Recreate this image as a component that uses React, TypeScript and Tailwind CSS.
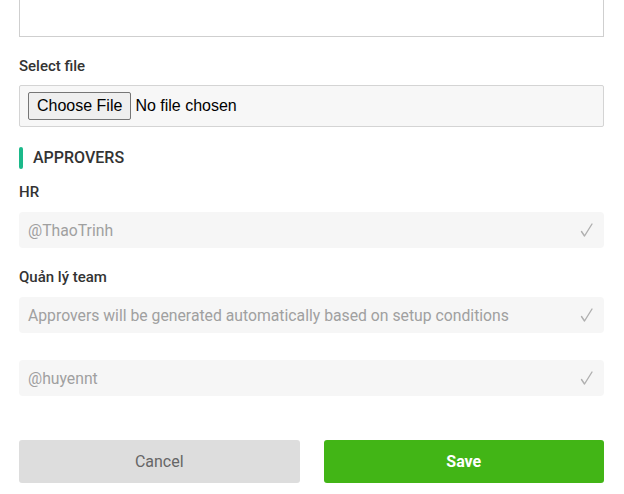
import React from 'react';

const font = { fontFamily: 'Roboto, "Noto Sans", sans-serif' };

function Check() {
  return (
    <svg width="13" height="14" viewBox="0 0 13 14" fill="none" className="shrink-0">
      <path d="M1.5 8.5 L4.5 13 L12 1" stroke="#b0b0b0" strokeWidth="1.4" strokeLinecap="round" strokeLinejoin="round" />
    </svg>
  );
}

function ApproverField({ label, value }: { label?: string; value: string }) {
  return (
    <div>
      {label && <div className="text-[15px] leading-[20px] font-medium text-[#333] mb-[10px]">{label}</div>}
      <div className="h-[36px] rounded-[4px] bg-[#f6f6f6] flex items-center justify-between pl-[9px] pr-[11px]">
        <span className="text-[15.75px] leading-[20px] pt-[2px] text-[#a0a0a0]">{value}</span>
        <Check />
      </div>
    </div>
  );
}

export default function App() {
  return (
    <div className="bg-white w-[624px] h-[494px] overflow-hidden px-[19px] pr-[20px]" style={font}>
      <textarea className="block w-full h-[80px] mt-[-43px] border border-[#cfcfcf] resize-none outline-none" />

      <div className="mt-[19px] text-[15px] leading-[20px] font-medium text-[#333]">Select file</div>
      <div className="mt-[9px] h-[42px] border border-[#d4d4d4] rounded-[2px] bg-[#f7f7f7] flex items-center pl-[8px]">
        <input type="file" className="text-[16px] text-black file:text-[16px] file:px-[8px] file:py-[1px] file:mr-[4px] file:border file:border-[#767676] file:rounded-[2px] file:bg-[#efefef]" style={{ fontFamily: '"Liberation Sans", Arial, sans-serif' }} />
      </div>

      <div className="mt-[19px] flex items-center gap-[10px]">
        <div className="w-[4px] h-[22px] rounded-[2px] bg-[#1bb98a]" />
        <div className="text-[16px] font-medium text-[#333]">APPROVERS</div>
      </div>

      <div className="mt-[12px]">
        <ApproverField label="HR" value="@ThaoTrinh" />
      </div>
      <div className="mt-[19px]">
        <ApproverField label="Quản lý team" value="Approvers will be generated automatically based on setup conditions" />
      </div>
      <div className="mt-[27px]">
        <ApproverField value="@huyennt" />
      </div>

      <div className="mt-[44px] flex gap-[24px]">
        <button className="flex-1 h-[43px] rounded-[3px] bg-[#dddddd] text-[16px] text-[#666]">Cancel</button>
        <button className="flex-1 h-[43px] rounded-[3px] bg-[#42b516] text-[16px] font-bold text-white">Save</button>
      </div>
    </div>
  );
}
